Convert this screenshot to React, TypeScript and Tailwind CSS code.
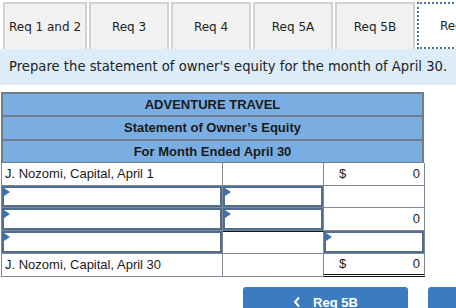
import React from 'react';

const tabs = ['Req 1 and 2', 'Req 3', 'Req 4', 'Req 5A', 'Req 5B'];

const Marker = () => (
  <span className="absolute left-0 top-0 w-0 h-0 border-t-[4px] border-b-[4px] border-l-[6px] border-t-transparent border-b-transparent border-l-[#3b73b9]" />
);

const InputCell = () => (
  <div className="relative h-full w-full border-2 border-[#4f6d91] bg-white">
    <Marker />
  </div>
);

const Cell = ({ children, className = '' }: { children?: React.ReactNode; className?: string }) => (
  <div className={`h-full border-r border-b border-[#7d8893] flex items-center ${className}`}>{children}</div>
);

const Amount = ({ dollar, value }: { dollar?: boolean; value?: string }) => (
  <div className="flex w-full items-center justify-between pl-[15px] pr-[4px]">
    <span>{dollar ? '$' : ''}</span>
    <span>{value}</span>
  </div>
);

export default function App() {
  return (
    <div className="w-[456px] h-[308px] overflow-hidden bg-white relative" style={{ fontFamily: '"DejaVu Sans", Verdana, sans-serif' }}>
      {/* Tabs */}
      <div className="flex gap-[2px] pt-[2px] pl-[3px] h-[49px]">
        {tabs.map((t, i) => (
          <div
            key={t}
            className={`${i === 0 ? 'w-[84px]' : 'w-[80px]'} shrink-0 h-full bg-[#f2f2f2] border-2 border-b-0 border-[#d2d2d2] flex items-center justify-center text-[12px] text-[#222]`}
          >
            {t}
          </div>
        ))}
        <div className="w-[80px] shrink-0 h-full bg-white border-2 border-dotted border-[#4d73a3] flex items-center justify-center text-[12px] text-[#222]">
          Req 6
        </div>
      </div>

      {/* Instruction band */}
      <div className="h-[36px] bg-[#dcecf9] flex items-center pl-[9px] text-[13.2px] text-[#222]">
        Prepare the statement of owner's equity for the month of April 30.
      </div>

      {/* Statement */}
      <div className="mt-[7px] ml-[1px] w-[423px] text-[13px] text-[#1a1a1a]" style={{ fontFamily: '"Liberation Sans", Arial, sans-serif' }}>
        <div className="border-2 border-b-0 border-[#6f7c8a] bg-[#7aaee3] font-bold text-center">
          <div className="h-[23px] flex items-center justify-center border-b-2 border-[#6f7c8a]">ADVENTURE TRAVEL</div>
          <div className="h-[24px] flex items-center justify-center border-b-2 border-[#6f7c8a]">Statement of Owner’s Equity</div>
          <div className="h-[22px] flex items-center justify-center border-b border-[#6f7c8a]">For Month Ended April 30</div>
        </div>

        <div className="grid grid-cols-[221px_101px_101px] grid-rows-[23px_22px_23px_23px_23px] border-l border-[#7d8893]">
          <Cell className="pl-[3px]">J. Nozomi, Capital, April 1</Cell>
          <Cell />
          <Cell><Amount dollar value="0" /></Cell>

          <Cell><InputCell /></Cell>
          <Cell><InputCell /></Cell>
          <Cell />

          <Cell><InputCell /></Cell>
          <Cell><InputCell /></Cell>
          <Cell><Amount value="0" /></Cell>

          <Cell><InputCell /></Cell>
          <div className="h-full border-r border-b border-[#7d8893] border-t border-t-[#111]" />
          <Cell><InputCell /></Cell>

          <Cell className="pl-[3px]">J. Nozomi, Capital, April 30</Cell>
          <Cell />
          <div className="h-full border-r border-r-[#7d8893] border-b-[3px] border-b-[#111] border-double flex items-center">
            <Amount dollar value="0" />
          </div>
        </div>
      </div>

      {/* Nav buttons */}
      <div className="absolute left-[243px] top-[287px] w-[165px] h-[30px] rounded-[3px] bg-[#3b7bbf] flex justify-center pt-[6px] text-white text-[13px] font-bold" style={{ fontFamily: '"Liberation Sans", Arial, sans-serif' }}>
        <svg width="8" height="12" viewBox="0 0 8 12" className="mr-[12px] mt-[3px]">
          <path d="M6 1.5 L2 6 L6 10.5" stroke="white" strokeWidth="2" fill="none" />
        </svg>
        Req 5B
      </div>
      <div className="absolute left-[428px] top-[287px] w-[60px] h-[30px] rounded-[3px] bg-[#3b7bbf]" />
    </div>
  );
}
